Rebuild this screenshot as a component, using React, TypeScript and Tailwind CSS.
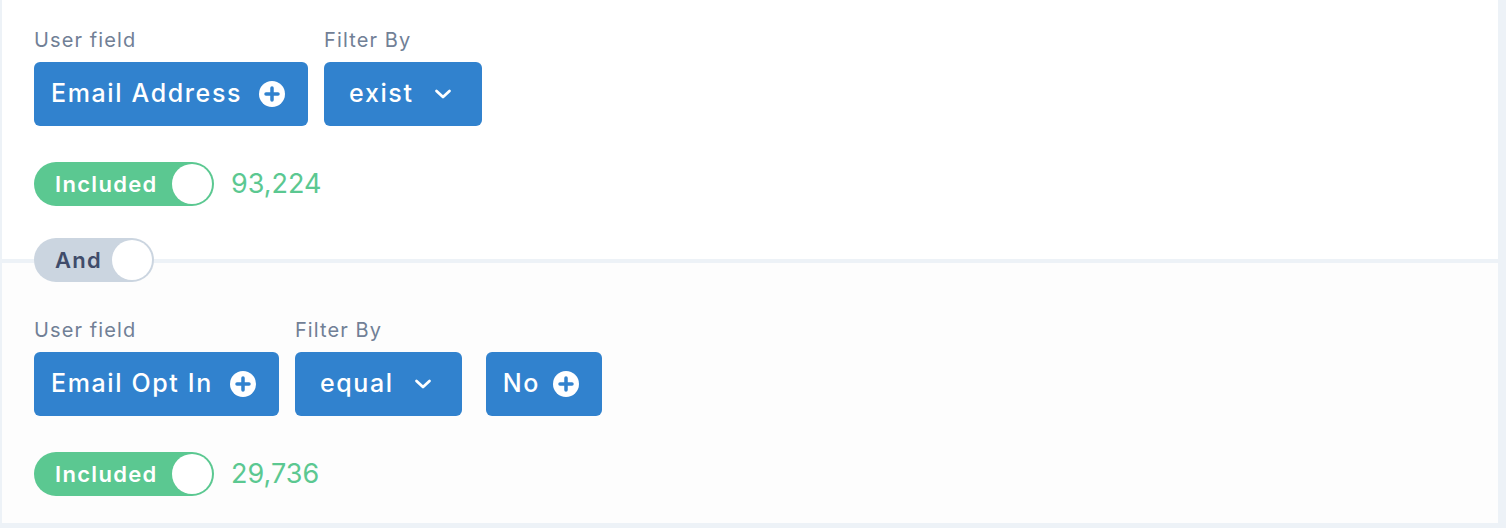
import { ReactNode } from "react";

const FONT = { fontFamily: "Inter, 'Noto Sans', sans-serif" };

/** White circle with a plus cut out of it. */
function PlusCircle() {
  return (
    <svg width="26" height="26" viewBox="0 0 26 26" className="shrink-0">
      <circle cx="13" cy="13" r="13" fill="white" />
      <path d="M13 7v12M7 13h12" stroke="#3182ce" strokeWidth="3.5" strokeLinecap="round" />
    </svg>
  );
}

function Chevron() {
  return (
    <svg width="20" height="20" viewBox="0 0 20 20" className="shrink-0">
      <path d="M3.5 7l6.5 6 6.5-6" fill="none" stroke="white" strokeWidth="2.75" strokeLinecap="round" strokeLinejoin="round" />
    </svg>
  );
}

function FieldButton({ label, short }: { label: string; short?: boolean }) {
  return (
    <button
      className={
        "h-16 flex items-center pl-[17px] pr-[23px] rounded-md bg-[#3182ce] text-white text-[25px] font-medium tracking-[0.065em] " +
        (short ? "gap-[13px]" : "gap-[17px]")
      }
    >
      <span>{label}</span>
      <PlusCircle />
    </button>
  );
}

function SelectButton({ label }: { label: string }) {
  return (
    <button className="h-16 flex items-center gap-[19px] pl-[25px] pr-[29px] rounded-md bg-[#3182ce] text-white text-[25px] font-medium tracking-[0.065em]">
      <span>{label}</span>
      <Chevron />
    </button>
  );
}

function Field({ label, children }: { label: string; children: ReactNode }) {
  return (
    <div className="flex flex-col">
      <div className="h-6 mb-[10px] text-[20px] leading-6 tracking-[0.055em] text-[#718096]">{label}</div>
      {children}
    </div>
  );
}

function Toggle({ label, on }: { label: string; on?: boolean }) {
  return (
    <div
      className={
        "h-11 flex items-center rounded-full pl-[21px] pr-[2px] text-[22px] font-semibold tracking-[0.06em] " +
        (on ? "w-[180px] bg-[#5bc891] text-white" : "w-[120px] bg-[#cbd5e0] text-[#404c6a]")
      }
    >
      <span>{label}</span>
      <span className="ml-auto w-10 h-10 rounded-full bg-white" />
    </div>
  );
}

function Count({ value }: { value: string }) {
  return <span className="text-[27px] text-[#5bc891] ml-[17px]">{value}</span>;
}

export default function App() {
  return (
    <div className="w-[1506px] h-[528px] bg-[#edf2f7] flex" style={FONT}>
      <div className="ml-[2px] w-[1496px] flex flex-col">
        <div className="bg-white px-8 pt-[28px] flex flex-col items-start">
          <div className="flex gap-4">
            <Field label="User field">
              <FieldButton label="Email Address" />
            </Field>
            <Field label="Filter By">
              <SelectButton label="exist" />
            </Field>
          </div>
          <div className="mt-9 flex items-center">
            <Toggle label="Included" on />
            <Count value="93,224" />
          </div>
          <div className="mt-8 -mb-[23px] relative z-10">
            <Toggle label="And" />
          </div>
        </div>
        <div className="h-1" />
        <div className="bg-[#fdfdfd] px-8 pt-[55px] h-[260px] flex flex-col items-start">
          <div className="flex gap-4">
            <Field label="User field">
              <FieldButton label="Email Opt In" />
            </Field>
            <Field label="Filter By">
              <SelectButton label="equal" />
            </Field>
            <div className="flex flex-col justify-end ml-2">
              <FieldButton label="No" short />
            </div>
          </div>
          <div className="mt-9 flex items-center">
            <Toggle label="Included" on />
            <Count value="29,736" />
          </div>
        </div>
      </div>
    </div>
  );
}
